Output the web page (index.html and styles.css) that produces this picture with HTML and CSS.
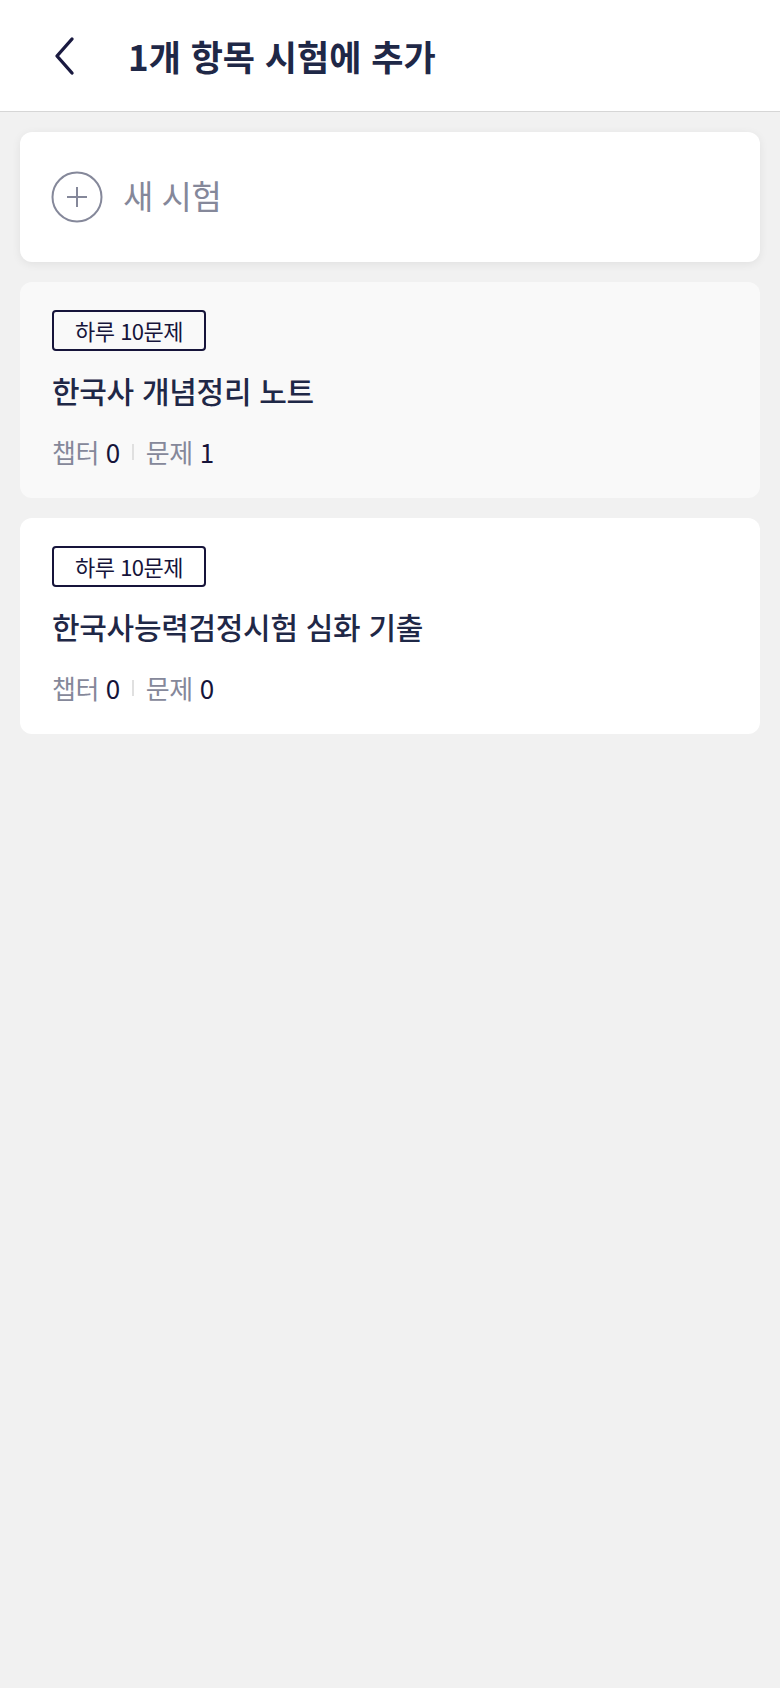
FILE: index.html
```html
<!DOCTYPE html>
<html lang="ko">
<head>
    <meta charset="UTF-8">
    <meta name="viewport" content="width=device-width, initial-scale=1.0">
    <title>시험에 추가</title>
    <link rel="stylesheet" href="styles.css">
</head>
<body>
    <div class="header">
        <span class="back">
            <svg width="24" height="40" viewBox="0 0 24 40">
                <path d="M20 3 L5 20 L20 37" fill="none" stroke="#1a1a40" stroke-width="3.4" stroke-linecap="round" stroke-linejoin="round"/>
            </svg>
        </span>
        <h1 class="title">1개 항목 시험에 추가</h1>
    </div>

    <div class="list">
        <div class="card new-card">
            <span class="plus">
                <svg width="52" height="52" viewBox="0 0 52 52">
                    <circle cx="26" cy="26" r="24.5" fill="none" stroke="#85889a" stroke-width="2"/>
                    <path d="M26 16 V36 M16 26 H36" stroke="#85889a" stroke-width="2"/>
                </svg>
            </span>
            <span class="new-label">새 시험</span>
        </div>

        <div class="card exam-card selected">
            <span class="tag">하루 10문제</span>
            <div class="exam-title">한국사 개념정리 노트</div>
            <div class="meta">
                <span class="meta-key">챕터</span> <span class="meta-val">0</span>
                <span class="sep"></span>
                <span class="meta-key">문제</span> <span class="meta-val">1</span>
            </div>
        </div>

        <div class="card exam-card">
            <span class="tag">하루 10문제</span>
            <div class="exam-title">한국사능력검정시험 심화 기출</div>
            <div class="meta">
                <span class="meta-key">챕터</span> <span class="meta-val">0</span>
                <span class="sep"></span>
                <span class="meta-key">문제</span> <span class="meta-val">0</span>
            </div>
        </div>
    </div>
</body>
</html>
```

FILE: styles.css
```css
body {
    margin: 0;
    background-color: #f1f1f1;
    font-family: "Noto Sans CJK KR", "Noto Sans", sans-serif;
    color: #1f2847;
}

.header {
    height: 111px;
    background-color: #fff;
    border-bottom: 1px solid #d6d6d6;
    display: flex;
    align-items: center;
}

.back {
    display: flex;
    margin-left: 52px;
    margin-top: 1px;
}

.title {
    margin: 0 0 0 52px;
    font-size: 35px;
    font-weight: 700;
    letter-spacing: 0;
    color: #1f2847;
}

.list {
    padding: 20px 20px;
    display: flex;
    flex-direction: column;
    gap: 20px;
}

.card {
    background-color: #fff;
    border-radius: 12px;
}

/* new exam row */
.new-card {
    height: 130px;
    display: flex;
    align-items: center;
    padding-left: 31px;
    box-shadow: 0 2px 10px rgba(0,0,0,0.07);
}

.plus {
    display: flex;
}

.new-label {
    margin-left: 20px;
    margin-top: -4px;
    font-size: 33px;
    color: #85889a;
    letter-spacing: -0.5px;
}

/* exam rows */
.exam-card {
    padding: 28px 32px 26px;
    height: 162px;
}

.exam-card.selected {
    background-color: #f9f9f9;
}

.tag {
    display: inline-block;
    border: 2px solid #16143a;
    border-radius: 4px;
    padding: 0 21px;
    height: 37px;
    line-height: 36px;
    font-size: 22px;
    color: #16143a;
    letter-spacing: -0.5px;
}

.exam-title {
    margin-top: 18px;
    font-size: 30px;
    font-weight: 500;
    line-height: 42px;
    letter-spacing: -0.3px;
    color: #1f2847;
}

.meta {
    margin-top: 23px;
    font-size: 26px;
    line-height: 36px;
    display: flex;
    align-items: center;
    letter-spacing: -0.5px;
}

.meta-key {
    color: #85889a;
    margin-right: 7px;
}

.meta-val {
    color: #16143a;
}

.sep {
    width: 2px;
    height: 16px;
    background-color: #e0e0e0;
    margin: 0 12px;
}
```
